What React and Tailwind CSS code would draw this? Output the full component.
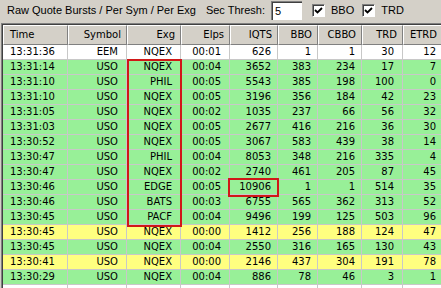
import React from 'react';

const cols = [
  { name: 'Time', align: 'left' },
  { name: 'Symbol' },
  { name: 'Exg' },
  { name: 'Elps' },
  { name: 'IQTS' },
  { name: 'BBO' },
  { name: 'CBBO' },
  { name: 'TRD' },
  { name: 'ETRD' },
];

const rows = [
  ['13:31:36', 'EEM', 'NQEX', '00:01', '626', '1', '1', '30', '12', 'w'],
  ['13:31:14', 'USO', 'NQEX', '00:04', '3652', '383', '234', '17', '7', 'g'],
  ['13:31:10', 'USO', 'PHIL', '00:05', '5543', '385', '198', '100', '0', 'g'],
  ['13:31:10', 'USO', 'NQEX', '00:05', '3196', '356', '184', '42', '23', 'g'],
  ['13:31:05', 'USO', 'NQEX', '00:02', '1035', '237', '66', '56', '32', 'g'],
  ['13:31:03', 'USO', 'NQEX', '00:05', '2677', '416', '216', '36', '30', 'g'],
  ['13:30:52', 'USO', 'NQEX', '00:05', '3067', '583', '439', '38', '14', 'g'],
  ['13:30:47', 'USO', 'PHIL', '00:04', '8053', '348', '216', '335', '4', 'g'],
  ['13:30:47', 'USO', 'NQEX', '00:02', '2740', '461', '205', '87', '45', 'g'],
  ['13:30:46', 'USO', 'EDGE', '00:05', '10906', '1', '1', '514', '35', 'g'],
  ['13:30:46', 'USO', 'BATS', '00:03', '6755', '565', '362', '313', '52', 'g'],
  ['13:30:45', 'USO', 'PACF', '00:04', '9496', '199', '125', '503', '96', 'g'],
  ['13:30:45', 'USO', 'NQEX', '00:00', '1412', '256', '188', '124', '47', 'y'],
  ['13:30:45', 'USO', 'NQEX', '00:04', '2550', '316', '165', '130', '43', 'g'],
  ['13:30:41', 'USO', 'NQEX', '00:00', '2146', '437', '304', '191', '78', 'y'],
  ['13:30:29', 'USO', 'NQEX', '00:04', '886', '78', '46', '3', '1', 'g'],
  ['', '', '', '', '', '', '', '', '', 'w'],
];

const rowBg = { w: 'bg-white', g: 'bg-[#98f098]', y: 'bg-[#ffff80]' };

// padding per column for data cells
const cellPad = ['pl-[7px]', 'pr-[8px]', 'pr-[8px]', 'pr-[8px]', 'pr-[6px]', 'pr-[6px]', 'pr-[6px]', 'pr-[8px]', 'pr-[6px]'];

function CheckBox({ label }) {
  return (
    <div className="flex items-center gap-[6px]">
      <div className="w-[13px] h-[13px] bg-white border-t border-l border-t-[#808080] border-l-[#808080] border-b border-r border-b-white border-r-white shadow-[inset_1px_1px_0_#404040] flex items-center justify-center">
        <svg width="9" height="9" viewBox="0 0 9 9">
          <path d="M1 4 L3.5 6.5 L8 2" stroke="#000" strokeWidth="1.8" fill="none" />
        </svg>
      </div>
      <span>{label}</span>
    </div>
  );
}

export default function App() {
  return (
    <div className="w-[441px] h-[288px] overflow-hidden bg-[#d4d0c8] text-black" style={{ fontFamily: '"Liberation Sans", Arial, sans-serif' }}>
      <div className="h-[20px] flex items-center pl-[7px] text-[11px]">
        <span>Raw Quote Bursts / Per Sym / Per Exg</span>
        <span className="ml-[10px]">Sec Thresh:</span>
        <div className="ml-[6px] mt-[1px] w-[31px] h-[19px] bg-white border-t border-l border-t-[#808080] border-l-[#808080] shadow-[inset_1px_1px_0_#404040] pl-[3px] flex items-center">5</div>
        <div className="ml-[10px]">
          <CheckBox label="BBO" />
        </div>
        <div className="ml-[8px]">
          <CheckBox label="TRD" />
        </div>
      </div>

      <div className="mt-[3px] ml-[1px] border-t border-l border-[#808080]">
        <div
          className="relative border-t border-l border-[#404040] text-[10px] leading-none"
          style={{ fontFamily: '"DejaVu Sans", Verdana, sans-serif' }}
        >
          <div className="grid grid-cols-[65px_59px_54px_49px_48px_40px_44px_41px_40px]">
            {cols.map((c, i) => (
              <div
                key={c.name}
                className={`h-[20px] flex items-center bg-[#d4d0c8] border-t border-t-white border-l border-l-white border-b border-b-[#808080] border-r border-r-[#808080] ${
                  c.align === 'left' ? 'justify-start pl-[6px]' : 'justify-end pr-[5px]'
                } ${i === 0 ? 'border-l-[#d4d0c8]' : ''}`}
              >
                {c.name}
              </div>
            ))}
            {rows.map((r, ri) =>
              r.slice(0, 9).map((v, ci) => (
                <div
                  key={`${ri}-${ci}`}
                  className={`h-[15px] flex items-center border-r border-b border-[#c8c8c8] ${rowBg[r[9]]} ${
                    ci === 0 ? 'justify-start' : 'justify-end'
                  } ${cellPad[ci]}`}
                >
                  {v}
                </div>
              ))
            )}
          </div>

          {/* highlight boxes */}
          <div className="absolute left-[124px] top-[34px] w-[55px] h-[168px] border-2 border-[#d01818]" />
          <div className="absolute left-[225px] top-[153px] w-[51px] h-[19px] border-2 border-[#d01818]" />
        </div>
      </div>
    </div>
  );
}
